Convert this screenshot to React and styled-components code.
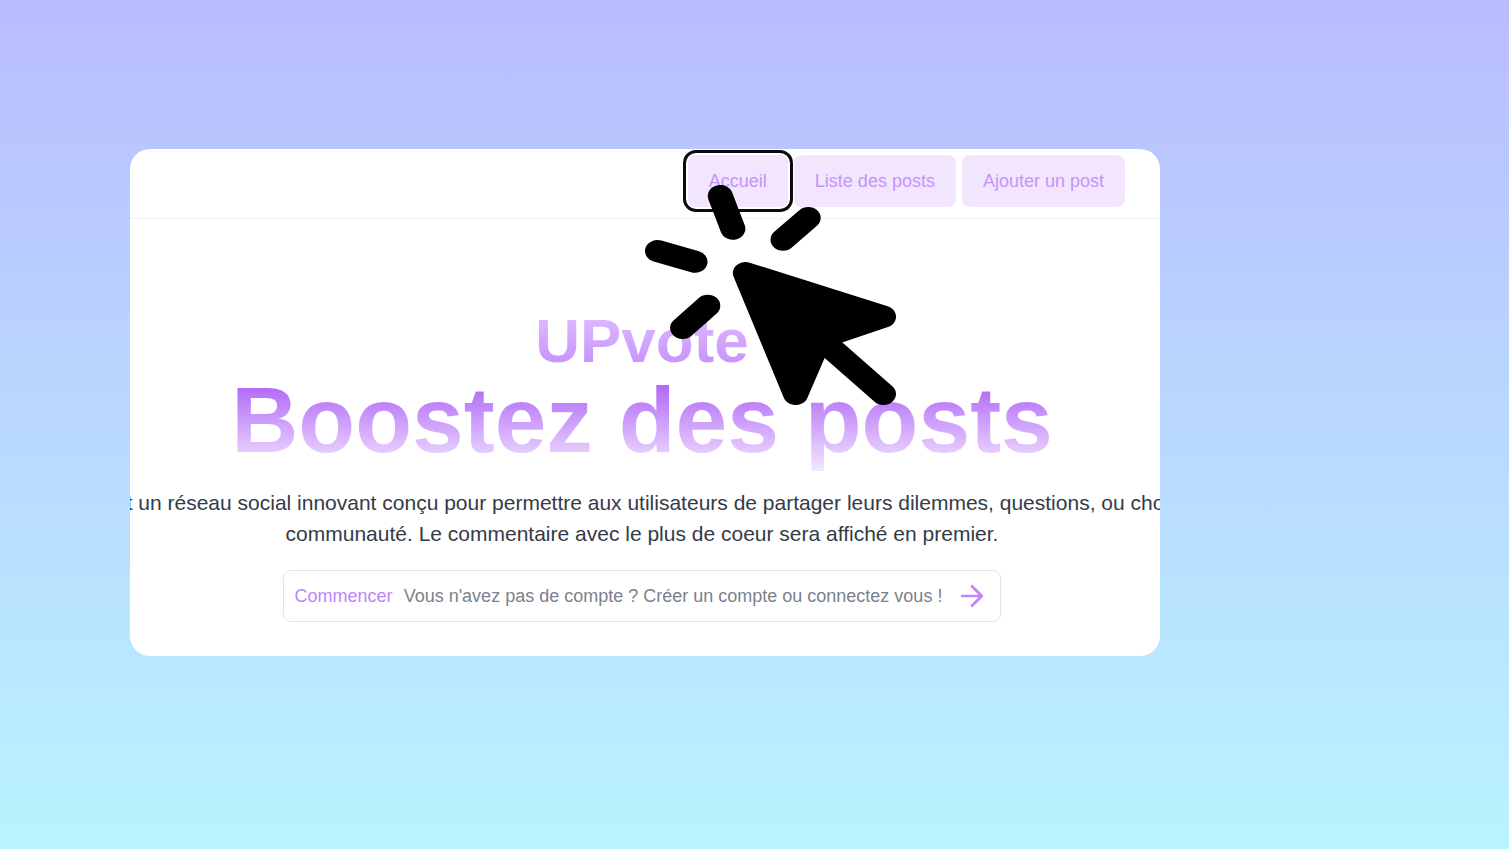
import React from "react";
import styled, { createGlobalStyle } from "styled-components";

const GlobalStyle = createGlobalStyle`
  *, *::before, *::after { box-sizing: border-box; }
  body {
    margin: 0;
    font-family: "Liberation Sans", Arial, sans-serif;
  }
`;

const Page = styled.div`
  min-height: 100vh;
  padding: 149px 130px;
  background: linear-gradient(180deg, #b9bcff 0%, #b9f4ff 100%);
`;

const Card = styled.main`
  position: relative;
  max-width: 1030px;
  overflow: hidden;
  background: #ffffff;
  border-radius: 20px;
`;

const NavBar = styled.nav`
  display: flex;
  justify-content: flex-end;
  gap: 6px;
  padding: 6px 35px 11px;
  border-bottom: 1px solid #f0f0f2;
`;

const NavButton = styled.button`
  height: 52px;
  padding: 0 21px;
  border: 0;
  border-radius: 8px;
  background: #f2e6ff;
  color: #c693fb;
  font: 18px/24px "Liberation Sans", Arial, sans-serif;
  white-space: nowrap;
  outline: ${(p) => (p.$focused ? "3px solid #0b0b0e" : "none")};
  outline-offset: 2px;
`;

const Hero = styled.section`
  display: flex;
  flex-direction: column;
  align-items: center;
  padding: 90px 6px 34px 0;
`;

const Title = styled.h1`
  display: flex;
  flex-direction: column;
  align-items: center;
  margin: 0;
  font-weight: 700;
  white-space: nowrap;
`;

const GradientText = styled.span`
  background: linear-gradient(180deg, ${(p) => p.$from}, ${(p) => p.$to});
  background-clip: text;
  -webkit-background-clip: text;
  color: transparent;
`;

const Brand = styled(GradientText)`
  font-size: 62px;
  line-height: 64px;
`;

const Slogan = styled(GradientText)`
  padding-bottom: 3px;
  font-size: 93px;
  line-height: 95px;
`;

const Intro = styled.p`
  margin: 16px 0 21px;
  color: #333b49;
  font-size: 21px;
  line-height: 31px;
  text-align: center;
  white-space: nowrap;
`;

const StartLink = styled.a`
  display: flex;
  align-items: center;
  gap: 11px;
  height: 52px;
  padding: 0 15px 0 11px;
  border: 1px solid #e2e4e8;
  border-radius: 8px;
  color: #7b818d;
  font-size: 18px;
  line-height: 24px;
  text-decoration: none;
  white-space: nowrap;
`;

const StartLabel = styled.span`
  color: #c084fc;
`;

const Arrow = styled.svg`
  width: 26px;
  height: 26px;
  margin-left: 6px;
  fill: none;
  stroke: #c084fc;
  stroke-width: 2.5;
  stroke-linecap: round;
  stroke-linejoin: round;
`;

const Pointer = styled.svg`
  position: absolute;
  top: 36px;
  left: 50%;
  width: 251px;
  height: 220px;
  pointer-events: none;
  stroke: #000000;
  stroke-width: 22;
  stroke-linecap: round;
  stroke-linejoin: round;
`;

const links = ["Accueil", "Liste des posts", "Ajouter un post"];

export default function App() {
  return (
    <Page>
      <GlobalStyle />
      <Card>
        <NavBar aria-label="Navigation principale">
          {links.map((label, i) => (
            <NavButton key={label} type="button" $focused={i === 0}>
              {label}
            </NavButton>
          ))}
        </NavBar>
        <Hero>
          <Title>
            <Brand $from="#dfc0ff" $to="#c48cfc">UPvote</Brand>
            <Slogan $from="#a855f7" $to="#f3e8ff">Boostez des posts</Slogan>
          </Title>
          <Intro>
            est un réseau social innovant conçu pour permettre aux utilisateurs de partager leurs dilemmes, questions, ou choix
            <br />
            communauté. Le commentaire avec le plus de coeur sera affiché en premier.
          </Intro>
          <StartLink href="#commencer">
            <StartLabel>Commencer</StartLabel>
            <span>Vous n'avez pas de compte ? Créer un compte ou connectez vous !</span>
            <Arrow viewBox="0 0 24 24" aria-hidden="true">
              <path d="M3 12h18M12 3l9 9-9 9" />
            </Arrow>
          </StartLink>
        </Hero>
        <Pointer viewBox="0 0 220 220" preserveAspectRatio="none" aria-hidden="true">
          <path d="M66 11L77 43.7M143 33L121 54.7M11 66L43.8 76.8M55 120.7L33 143" />
          <path d="M88 88L209 131.7L153.2 153.2L132 209Z" />
          <path d="M150 150L209 209" />
        </Pointer>
      </Card>
    </Page>
  );
}
